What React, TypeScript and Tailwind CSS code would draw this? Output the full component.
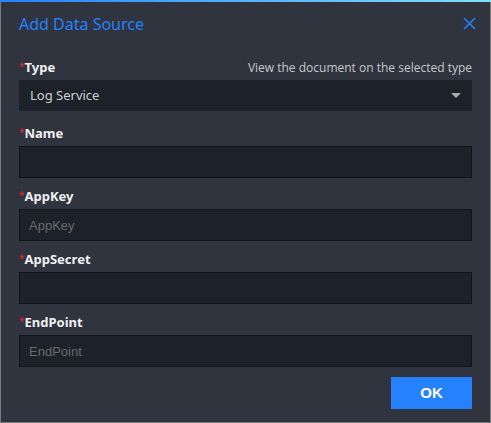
import { useState } from 'react';

const fields = [
  { label: 'Name', placeholder: '' },
  { label: 'AppKey', placeholder: 'AppKey' },
  { label: 'AppSecret', placeholder: '' },
  { label: 'EndPoint', placeholder: 'EndPoint' },
];

export default function App() {
  const [type] = useState('Log Service');

  return (
    <div className="w-[491px] h-[423px] bg-[#2f343e] flex flex-col border-x border-b border-[#7a7a7a] font-['Noto_Sans',sans-serif]">
      {/* top accent */}
      <div className="h-[2px] -mx-px bg-gradient-to-r from-[#2681ff] to-[#86ddf7]" />
      {/* header */}
      <div className="flex items-center justify-between pl-[18px] pr-[13px] h-[43px]">
        <span className="text-[16px] text-[#2681ff]">Add Data Source</span>
        <button className="w-4 h-4 flex items-center justify-center text-[#2681ff]">
          <svg width="13" height="13" viewBox="0 0 13 13" fill="none" stroke="currentColor" strokeWidth="1.6">
            <path d="M1 1L12 12M12 1L1 12" />
          </svg>
        </button>
      </div>

      <div className="flex flex-col px-[18px]">
        {/* Type */}
        <div className="flex items-center justify-between h-[18px] mt-[14px]">
          <label className="text-[13px] font-bold text-[#f0f0f0]">
            <span className="relative -top-[2px] text-[#e0242b] text-[10px] font-normal">*</span>Type
          </label>
          <span className="text-[12px] text-[#c8c8c8] font-['Open_Sans',sans-serif]">View the document on the selected type</span>
        </div>
        <div className="mt-[3px] h-[31px] bg-[#1d212a] flex items-center justify-between pl-[11px] pr-[11px]">
          <span className="text-[13px] text-[#cfcfcf]">{type}</span>
          <svg width="10" height="5" viewBox="0 0 10 5">
            <path d="M0 0H10L5 5Z" fill="#a9a9a9" />
          </svg>
        </div>

        {fields.map((f, i) => (
          <div key={f.label} className={i === 0 ? 'mt-[13px]' : 'mt-[9px]'}>
            <label className="block h-[18px] text-[13px] font-bold text-[#f0f0f0]">
              <span className="relative -top-[2px] text-[#e0242b] text-[10px] font-normal">*</span>
              {f.label}
            </label>
            <input
              className="mt-1 w-full h-8 bg-[#1d212a] border border-[#111419] px-[9px] text-[13px] text-[#cfcfcf] outline-none placeholder:text-[#6a6a6a] font-['Liberation_Sans',sans-serif]"
              placeholder={f.placeholder}
            />
          </div>
        ))}

        <div className="flex justify-end mt-[10px]">
          <button className="w-[81px] h-8 bg-[#2681ff] text-white text-[15px] font-bold font-['Liberation_Sans',sans-serif]">
            OK
          </button>
        </div>
      </div>
    </div>
  );
}
